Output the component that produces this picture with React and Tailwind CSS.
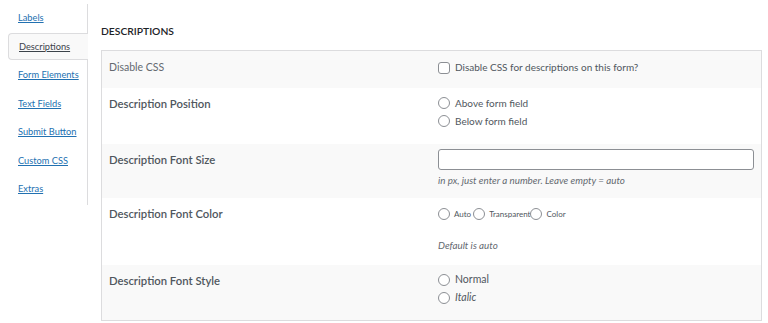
import React, { useState } from 'react';

const tabs = ['Labels', 'Descriptions', 'Form Elements', 'Text Fields', 'Submit Button', 'Custom CSS', 'Extras'];

const Radio = () => (
  <span className="inline-block h-[12px] w-[12px] rounded-full border border-[#8c8f94] bg-white shrink-0" />
);

const Label = ({ children }) => (
  <div className="w-[329px] pl-[7px] pt-[8px] text-[11.3px] font-semibold text-[#50575e]">{children}</div>
);

const App = () => {
  const [active] = useState('Descriptions');

  return (
    <div className="flex w-[768px] h-[323px] bg-white text-[10px] overflow-hidden" style={{ fontFamily: 'Lato, "Open Sans", sans-serif' }}>
      <div className="w-[88px] shrink-0 pt-[4px]">
        <ul className="border-r border-[#dcdcde] h-[201px] text-[9.25px]">
          {tabs.map(t => (
            <li key={t} className="h-[28.5px] flex items-center">
              {t === active ? (
                <span className="ml-[8px] w-[80px] -mr-px h-[27px] flex items-center pl-[10px] bg-[#f9f9f9] border border-r-0 border-[#dcdcde] rounded-l-[4px] text-[#3c434a] underline">
                  {t}
                </span>
              ) : (
                <a href="#" className="pl-[18px] text-[#2271b1] underline">{t}</a>
              )}
            </li>
          ))}
        </ul>
      </div>

      <div className="flex-1 pl-[13px] pr-[6px]">
        <h2 className="mt-[25px] h-[13px] leading-[13px] text-[10.3px] font-semibold text-[#1d2327] uppercase">Descriptions</h2>
        <div className="mt-[12px] border border-[#dcdcde] w-[661px]">
          <div className="flex bg-[#f9f9f9] h-[37px]">
            <div className="w-[329px] pl-[7px] pt-[9px] text-[10.5px] text-[#646970]">Disable CSS</div>
            <div className="flex-1 pl-[7px] pt-[9px]">
              <label className="flex items-center gap-[5px] text-[#50575e]">
                <span className="inline-block h-[12px] w-[12px] rounded-[3px] border border-[#8c8f94] bg-white" />
                Disable CSS for descriptions on this form?
              </label>
            </div>
          </div>

          <div className="flex bg-white h-[56px]">
            <Label>Description Position</Label>
            <div className="flex-1 pl-[7px] pt-[8px] flex flex-col gap-[4px] text-[#50575e]">
              <label className="flex items-center gap-[5px] h-[14px]"><Radio />Above form field</label>
              <label className="flex items-center gap-[5px] h-[14px]"><Radio />Below form field</label>
            </div>
          </div>

          <div className="flex bg-[#f9f9f9] h-[54px]">
            <Label>Description Font Size</Label>
            <div className="flex-1 pl-[7px] pr-[7px] pt-[5px]">
              <input type="text" className="block w-full h-[21px] rounded-[3px] border border-[#8c8f94] bg-white" />
              <p className="mt-[3px] italic text-[9.8px] text-[#646970]">in px, just enter a number. Leave empty = auto</p>
            </div>
          </div>

          <div className="flex bg-white h-[67px]">
            <Label>Description Font Color</Label>
            <div className="flex-1 pl-[7px] pt-[9px] text-[#50575e]">
              <div className="flex items-center text-[8px] h-[14px]">
                <Radio /><span className="ml-[4px] mr-[2px]">Auto</span>
                <Radio /><span className="ml-[4px]">Transparent</span>
                <Radio /><span className="ml-[4px]">Color</span>
              </div>
              <p className="mt-[17px] italic text-[9.8px] text-[#646970]">Default is auto</p>
            </div>
          </div>

          <div className="flex bg-[#f9f9f9] h-[55px]">
            <Label>Description Font Style</Label>
            <div className="flex-1 pl-[7px] pt-[8px] flex flex-col gap-[4px] text-[#50575e] text-[10.5px]">
              <label className="flex items-center gap-[5px] h-[14px]"><Radio />Normal</label>
              <label className="flex items-center gap-[5px] h-[14px] italic"><Radio />Italic</label>
            </div>
          </div>
        </div>
      </div>
    </div>
  );
};

export default App;
